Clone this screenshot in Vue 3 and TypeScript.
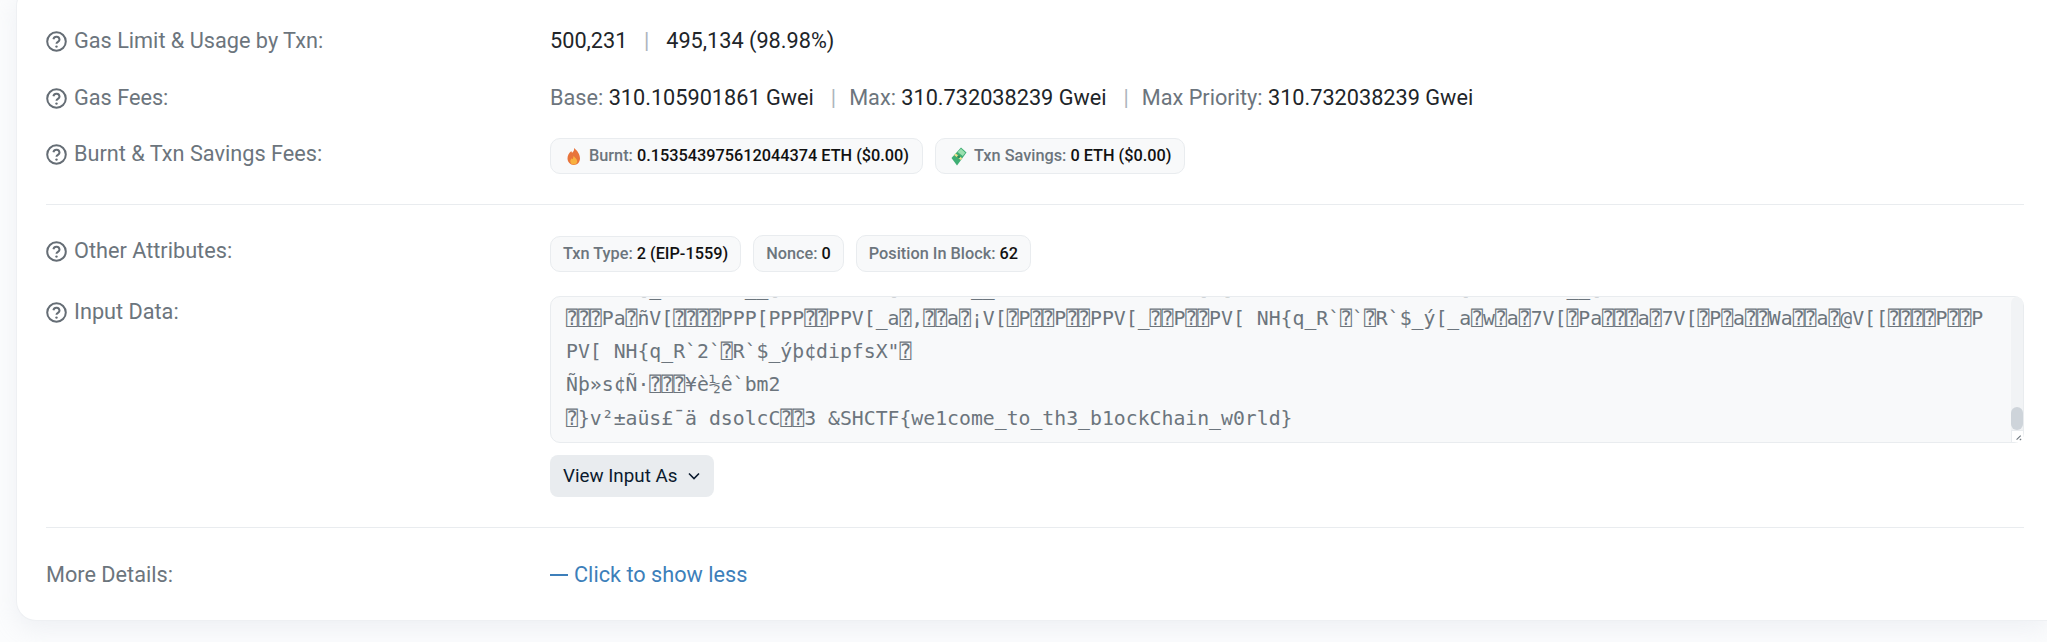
<script setup lang="ts">
const q = '\u2370'
// The line above the visible ones: only its descenders show inside the box.
const cutMarks: Record<number, string> = { 6: '[', 7: '_', 15: '_', 16: '_', 17: '[', 27: '[', 34: '_', 35: '_', 53: '[', 55: '[', 75: '[', 84: '_', 85: '_', 86: '[' }
const clipped = Array.from({ length: 87 }, (_, i) => cutMarks[i] ?? 'a').join('')
const lines: string[] = [
  `${q}${q}${q}Pa${q}ñV[${q}${q}${q}${q}PPP[PPP${q}${q}PPV[_a${q},${q}${q}a${q}¡V[${q}P${q}${q}P${q}${q}PPV[_${q}${q}P${q}${q}PV[ NH{q_R\`${q}\`${q}R\`$_ý[_a${q}w${q}a${q}7V[${q}Pa${q}${q}${q}a${q}7V[${q}P${q}a${q}${q}Wa${q}${q}a${q}@V[[${q}${q}${q}${q}P${q}${q}P`,
  `PV[ NH{q_R\`2\`${q}R\`$_ýþ¢dipfsX"${q}`,
  `Ñþ»s¢Ñ·${q}${q}${q}¥è½ê\`bm2`,
  `${q}}v²±aüs£¯ä dsolcC${q}${q}3 &SHCTF{we1come_to_th3_b1ockChain_w0rld}`,
]
</script>

<template>
  <main class="card">
    <section class="row row-text">
      <div class="label"><svg class="help" viewBox="0 0 21 21"><circle cx="10.5" cy="10.5" r="9.3" /><path d="M7.4 8.200a3.100 3.100 0 0 1 6.100.5c0 2-3 2.200-3 4" /><circle class="dot" cx="10.5" cy="15.6" r="1.2" /></svg>Gas Limit &amp; Usage by Txn:</div>
      <div class="value dark"><span>500,231</span><span class="sep wide">|</span><span>495,134 (98.98%)</span></div>
    </section>
    <section class="row row-text second">
      <div class="label"><svg class="help" viewBox="0 0 21 21"><circle cx="10.5" cy="10.5" r="9.3" /><path d="M7.4 8.200a3.100 3.100 0 0 1 6.100.5c0 2-3 2.200-3 4" /><circle class="dot" cx="10.5" cy="15.6" r="1.2" /></svg>Gas Fees:</div>
      <div class="value"><span class="muted">Base: </span><span class="dark">310.105901861 Gwei</span><span class="sep">|</span><span class="muted">Max: </span><span class="dark">310.732038239 Gwei</span><span class="sep">|</span><span class="muted">Max Priority: </span><span class="dark">310.732038239 Gwei</span></div>
    </section>
    <section class="row row-badges first-badges">
      <div class="label"><svg class="help" viewBox="0 0 21 21"><circle cx="10.5" cy="10.5" r="9.3" /><path d="M7.4 8.200a3.100 3.100 0 0 1 6.100.5c0 2-3 2.200-3 4" /><circle class="dot" cx="10.5" cy="15.6" r="1.2" /></svg>Burnt &amp; Txn Savings Fees:</div>
      <div class="badges">
        <span class="badge tall">
          <svg class="flame" viewBox="0 0 16 20"><path fill="#e8743b" d="M8.300 0c.6 3-1 4.400-2.300 5.700-.5-.7-.8-1.300-.8-2.200C2.400 6 .6 8.600.6 12c0 4.500 3.300 8 7.400 8s7.400-3.300 7.400-7.700C15.400 7.300 11.800 2.500 8.300 0z" /><path fill="#f8b13f" d="M8 9c.5 1.800 4.100 3.700 4.100 6.500 0 2.300-1.800 4-4.100 4s-4.100-1.700-4.100-4c0-1.700 1-2.900 2-3.500.2.700.5 1.100 1 1.400C7 12 7.300 10.500 8 9z" /></svg>
          <span class="muted">Burnt: </span><b>0.153543975612044374 ETH ($0.00)</b>
        </span>
        <span class="badge tall">
          <svg class="cash" viewBox="0 0 16 19"><path fill="#3fae74" d="M10 .5 15.500 5.500 6 18.500.5 11z" /><path fill="#9be0ae" d="M10 1.800 14.300 5.700 11.800 9 6.500 5z" /><path fill="#f3e08a" d="M4.600 6.500 11.200 11.300 9.900 13 3.300 8.200z" /><circle fill="#2c8f5c" cx="7.600" cy="9.700" r="1.500" /></svg>
          <span class="muted">Txn Savings: </span><b>0 ETH ($0.00)</b>
        </span>
      </div>
    </section>
    <hr class="rule rule-one" />
    <section class="row row-badges second-badges">
      <div class="label"><svg class="help" viewBox="0 0 21 21"><circle cx="10.5" cy="10.5" r="9.3" /><path d="M7.4 8.200a3.100 3.100 0 0 1 6.100.5c0 2-3 2.200-3 4" /><circle class="dot" cx="10.5" cy="15.6" r="1.2" /></svg>Other Attributes:</div>
      <div class="badges bottom">
        <span class="badge short"><span class="muted">Txn Type: </span><b>2 (EIP-1559)</b></span>
        <span class="badge"><span class="muted">Nonce: </span><b>0</b></span>
        <span class="badge"><span class="muted">Position In Block: </span><b>62</b></span>
      </div>
    </section>
    <section class="row row-input">
      <div class="label"><svg class="help" viewBox="0 0 21 21"><circle cx="10.5" cy="10.5" r="9.3" /><path d="M7.4 8.200a3.100 3.100 0 0 1 6.100.5c0 2-3 2.200-3 4" /><circle class="dot" cx="10.5" cy="15.6" r="1.2" /></svg>Input Data:</div>
      <div class="input-col">
        <div class="data-wrap">
          <div class="data">
            <div class="line cut" aria-hidden="true">{{ clipped }}</div>
            <div v-for="(line, i) in lines" :key="i" class="line">{{ line }}</div>
          </div>
          <div class="track"><span class="thumb"></span></div>
          <div class="resizer"><svg viewBox="0 0 12 12"><path d="M9.500 5 5 9.500M10 8.500 8.500 10" /></svg></div>
        </div>
        <button class="view-btn" type="button">View Input As<svg viewBox="0 0 14 14"><path d="M2 4.500 7 9.500 12 4.500" /></svg></button>
      </div>
    </section>
    <hr class="rule rule-two" />
    <section class="row row-more">
      <div class="label plain">More Details:</div>
      <a class="more-link"><span class="minus"></span>Click to show less</a>
    </section>
  </main>
</template>

<style scoped>
.card {
  box-sizing: border-box;
  margin: -14px 0 0 16px;
  height: 635px;
  padding: 40px 23px 0 29px;
  background: #fff;
  border: 1px solid #eef0f3;
  border-right: 0;
  border-radius: 20px 0 0 20px;
  box-shadow: 0 8px 24px rgba(189, 197, 209, 0.2);
  font-family: Roboto, "Liberation Sans", sans-serif;
  font-size: 21.7px;
  line-height: 28px;
  color: #212529;
}
.row { display: flex; align-items: flex-start; }
.row-text { height: 28px; margin-bottom: 29px; }
.row-text.second { margin-bottom: 26px; }
.label {
  flex: 0 0 504px;
  display: flex;
  align-items: center;
  gap: 7px;
  color: #6c757d;
}
.help { width: 21px; height: 21px; fill: none; stroke: #656d75; stroke-width: 2; flex: none; }
.help .dot { fill: #656d75; stroke: none; }
.dark { color: #212529; }
.muted { color: #6c757d; }
.value { white-space: pre; }
.sep { margin: 0 13px 0 17px; color: #adb5bd; }
.sep.wide { margin: 0 17px 0 16.500px; }
.row-badges .label { padding-top: 2px; }
.first-badges { height: 36px; }
.second-badges { height: 37px; }
.badges { display: flex; gap: 12px; }
.badges.bottom { align-items: flex-end; height: 37px; }
.badge {
  box-sizing: border-box;
  height: 37px;
  display: inline-flex;
  align-items: center;
  white-space: pre;
  padding: 0 12px;
  background: #f8f9fa;
  border: 1px solid #e9ecef;
  border-radius: 10px;
  font-size: 16.3px;
  line-height: 22px;
}
.badge.tall { height: 36px; padding: 0 13px 0 15px; }
.badge.short { height: 36px; }
.badge b { font-weight: 500; color: #111; }
.badge .muted { font-weight: 500; }
.flame { width: 13.5px; height: 17px; flex: none; margin: 0 8.5px 0 1px; }
.cash { width: 16px; height: 19px; flex: none; margin-right: 7px; }
.rule { margin: 0; border: 0; border-top: 1px solid #e9ecef; }
.rule-one { margin-top: 30px; margin-bottom: 30px; }
.row-input { margin-top: 24px; }
.row-input .label { padding-top: 2px; }
.input-col { flex: 1; min-width: 0; }
.data-wrap { position: relative; height: 147px; }
.data {
  box-sizing: border-box;
  height: 100%;
  display: flex;
  flex-direction: column;
  justify-content: flex-end;
  padding: 0 27px 7px 15px;
  background: #f8f9fa;
  border: 1px solid #e9ecef;
  border-radius: 10px;
  color: #6c757d;
  font-family: "DejaVu Sans Mono", "Liberation Mono", monospace;
  font-size: 19.8px;
  line-height: 33.3px;
  overflow: hidden;
}
.line { white-space: pre; flex: none; }
.line.cut { margin-bottom: -3px; }
.track {
  position: absolute;
  top: 1px;
  right: 1px;
  bottom: 13px;
  width: 12px;
  background: #f1f3f5;
  border-radius: 10px 10px 0 0;
}
.thumb {
  position: absolute;
  left: 0;
  right: 0;
  bottom: 0;
  height: 23px;
  background: #ced4da;
  border-radius: 6px;
}
.resizer {
  position: absolute;
  right: 1px;
  bottom: 1px;
  width: 12px;
  height: 12px;
  background: #fff;
  border-left: 1px solid #e9ecef;
  border-top: 1px solid #e9ecef;
  box-sizing: border-box;
}
.resizer svg { display: block; width: 11px; height: 11px; fill: none; stroke: #6c757d; stroke-width: 1.2; }
.view-btn {
  display: inline-flex;
  align-items: center;
  gap: 10px;
  height: 42px;
  margin-top: 12px;
  padding: 0 13px;
  background: #e9ecef;
  border: 0;
  border-radius: 8px;
  color: #0b1a2e;
  font-family: Roboto, "Liberation Sans", sans-serif;
  font-size: 18.8px;
}
.view-btn svg { width: 14px; height: 14px; fill: none; stroke: #0b1a2e; stroke-width: 1.6; }
.rule-two { margin-top: 30px; margin-bottom: 33px; }
.label.plain { display: block; }
.more-link {
  display: flex;
  align-items: center;
  color: #3d7fba;
}
.minus {
  display: inline-block;
  width: 18px;
  height: 2px;
  margin-right: 6px;
  background: #3d7fba;
}
</style>

<style>
html, body { margin: 0; height: 100%; overflow: hidden; background: #fbfcfd; }
</style>
